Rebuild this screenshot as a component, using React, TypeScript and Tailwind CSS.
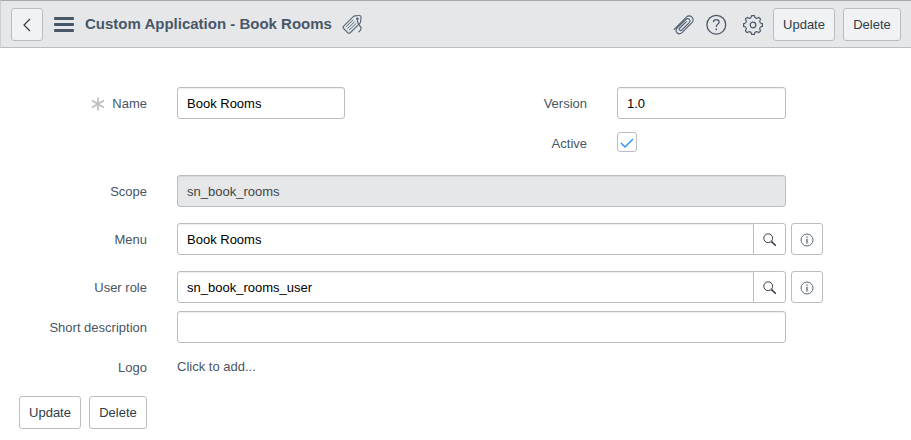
import React from "react";

const buttonBase =
  "flex shrink-0 items-center justify-center rounded-[3px] border border-[#bcbdc2] text-[13px] text-[#2e3d49]";

function BackIcon() {
  return (
    <svg width="10" height="16" viewBox="0 0 10 16" fill="none" stroke="#343d47" strokeWidth="1.2">
      <path d="M8 2 L2 8 L8 14" />
    </svg>
  );
}

function TagIcon() {
  return (
    <svg width="22" height="22" viewBox="0 0 22 22" fill="none" stroke="#5c6a7c" strokeWidth="1.2" strokeLinecap="round" strokeLinejoin="round">
      <path d="M11.3 2.6 Q12 2 13 1.9 L17 1.5 Q19 1.4 19 3.2 L18.6 7.6 Q18.5 8.6 17.8 9.3 L8.2 18.8 Q7 19.8 5.9 18.8 L1.6 14.5 Q.6 13.3 1.7 12.2 Z" />
      <path d="M4.2 12.6 L11 6.2 M5.7 14.3 L12.5 7.9 M7.2 16 L14 9.6" strokeWidth="1" />
      <path d="M15.4 4.5 V7 Q15.6 9.3 17.6 11.5 Q20.8 14.8 17 17.8" />
      <circle cx="15.4" cy="4.8" r=".8" />
    </svg>
  );
}

function ClipIcon() {
  return (
    <svg width="22" height="22" viewBox="0 0 22 22" fill="none" stroke="#4f5d6e" strokeWidth="1.1" strokeLinecap="round" strokeLinejoin="round">
      <path d="M1.2 15.4 L13.4 3.2 C17 -.2 22.6 4.8 19 8.6 L9 18.6 C5.4 21.8 1 17.4 4.3 13.9 L13 5.4 C15.3 3.3 18.5 6.2 16.3 8.6 L8.8 16 C7.3 17.4 5.3 15.6 6.8 14 L13.4 7.6" />
    </svg>
  );
}

function HelpIcon() {
  return (
    <svg width="22" height="22" viewBox="0 0 22 22" fill="none" stroke="#4a5868" strokeWidth="1.3">
      <circle cx="11.3" cy="10.7" r="9.4" />
      <path d="M8.4 8.1 Q8.5 5.6 11.3 5.6 Q14.1 5.6 14.1 8 Q14.1 9.3 12.7 10.2 Q11.3 11.1 11.3 13.1" />
      <path d="M11.3 14.5 V16.2" strokeWidth="1.6" />
    </svg>
  );
}

function GearIcon() {
  return (
    <svg width="22" height="22" viewBox="0 0 22 22" fill="none" stroke="#4a5868" strokeWidth="1.2" strokeLinejoin="round">
      <path d="M8.1 4.1 Q9 3.8 9.3 2.8 L9.6 1.6 H12.4 L12.7 2.8 Q13 3.8 13.9 4.1 Q14.8 4.5 15.7 4 L16.8 3.4 L18.6 5.2 L18 6.3 Q17.5 7.2 17.9 8.1 Q18.2 9 19.2 9.3 L20.4 9.6 V12.4 L19.2 12.7 Q18.2 13 17.9 13.9 Q17.5 14.8 18 15.7 L18.6 16.8 L16.8 18.6 L15.7 18 Q14.8 17.5 13.9 17.9 Q13 18.2 12.7 19.2 L12.4 20.4 H9.6 L9.3 19.2 Q9 18.2 8.1 17.9 Q7.2 17.5 6.3 18 L5.2 18.6 L3.4 16.8 L4 15.7 Q4.5 14.8 4.1 13.9 Q3.8 13 2.8 12.7 L1.6 12.4 V9.6 L2.8 9.3 Q3.8 9 4.1 8.1 Q4.5 7.2 4 6.3 L3.4 5.2 L5.2 3.4 L6.3 4 Q7.2 4.5 8.1 4.1 Z" />
      <circle cx="11" cy="11" r="2.8" />
    </svg>
  );
}

function SearchIcon() {
  return (
    <svg width="14" height="14" viewBox="0 0 14 14" fill="none" stroke="#343d47">
      <circle cx="5.2" cy="5.2" r="4.4" strokeWidth="1" />
      <path d="M8.4 8.4 L12.8 12.8" strokeWidth="1.5" />
    </svg>
  );
}

function InfoIcon() {
  return (
    <svg width="14" height="14" viewBox="0 0 14 14" fill="none" stroke="#5f6874">
      <circle cx="7" cy="7" r="6" strokeWidth="1" />
      <path d="M7 5.8 V10.6 M7 3.4 V4.7" strokeWidth="1.3" />
    </svg>
  );
}

function RequiredIcon() {
  return (
    <svg width="14" height="14" viewBox="0 0 14 14" stroke="#bcbec3" strokeWidth="1.7">
      <path d="M7 .5 V13.5 M1 3.5 L13 10.5 M13 3.5 L1 10.5" />
    </svg>
  );
}

function Label({ children, required = false }: { children: React.ReactNode; required?: boolean }) {
  return (
    <div className="flex w-[147px] shrink-0 items-center justify-end gap-[7px] pt-px text-[#485563]">
      {required && <RequiredIcon />}
      <span>{children}</span>
    </div>
  );
}

const inputBase =
  "flex h-8 items-center border border-[#bcbdc2] px-[9px] pt-[2px] shadow-[inset_0_1px_1px_rgba(0,0,0,0.07)]";

function ReferenceRow({ label, value }: { label: string; value: string }) {
  return (
    <div className="flex h-8">
      <Label>{label}</Label>
      <div className={`${inputBase} ml-[30px] w-[577px] rounded-l-[3px] text-black`}>{value}</div>
      <button className={`${buttonBase} -ml-px h-8 w-[33px] rounded-l-none pt-[2px]`}>
        <SearchIcon />
      </button>
      <button className={`${buttonBase} ml-[5px] h-8 w-8 pt-[2px]`}>
        <InfoIcon />
      </button>
    </div>
  );
}

export default function App() {
  return (
    <div className="h-[440px] w-[911px] overflow-hidden bg-white font-['Liberation_Sans',Arial,sans-serif] text-[13px] leading-4">
      <header className="flex h-12 items-center border-t border-b border-l border-t-[#a9a9ab] border-b-[#bcbdc2] border-l-[#cfd0d4] bg-[#e6e7e9] pt-px pl-[10px]">
        <button className={`${buttonBase} h-[33px] w-8 bg-[#f1f2f4]`}>
          <BackIcon />
        </button>
        <div className="ml-[11px] flex w-5 flex-col gap-[3px]">
          <span className="h-[3px] rounded-[1px] bg-[#485768]" />
          <span className="h-[3px] rounded-[1px] bg-[#485768]" />
          <span className="h-[3px] rounded-[1px] bg-[#485768]" />
        </div>
        <h1 className="ml-[11px] w-[247px] pb-[2px] text-[15px] leading-4 font-bold whitespace-nowrap text-[#485768]">
          Custom Application - Book Rooms
        </h1>
        <span className="ml-[10px]"><TagIcon /></span>
        <div className="ml-auto flex items-center pr-[10px]">
          <ClipIcon />
          <span className="ml-[10px]"><HelpIcon /></span>
          <span className="ml-[15px]"><GearIcon /></span>
          <button className={`${buttonBase} ml-[9px] h-[33px] w-[62px] bg-[#f1f2f4]`}>Update</button>
          <button className={`${buttonBase} ml-2 h-[33px] w-[58px] bg-[#f1f2f4]`}>Delete</button>
        </div>
      </header>

      <main className="pt-[39px]">
        <div className="flex h-8">
          <Label required>Name</Label>
          <div className={`${inputBase} ml-[30px] w-[168px] rounded-[3px] text-black`}>Book Rooms</div>
          <div className="flex w-[242px] items-center justify-end pt-px text-[#485563]">Version</div>
          <div className={`${inputBase} ml-[30px] w-[169px] rounded-[3px] text-black`}>1.0</div>
        </div>
        <div className="mt-[13px] flex h-5">
          <div className="flex w-[587px] items-center justify-end pt-[3px] text-[#485563]">Active</div>
          <div className="ml-[30px] flex size-5 items-center justify-center rounded-[3px] border border-[#bcbdc2] pt-px">
            <svg width="14" height="12" viewBox="0 0 14 12" fill="none" stroke="#278efc" strokeWidth="1.4">
              <path d="M1 6 L5 10 L13 2" />
            </svg>
          </div>
        </div>
        <div className="mt-[23px] flex h-8">
          <Label>Scope</Label>
          <div className={`${inputBase} ml-[30px] w-[609px] rounded-[3px] bg-[#e6e7e9] text-[#444444]`}>sn_book_rooms</div>
        </div>
        <div className="mt-4 flex flex-col gap-4">
          <ReferenceRow label="Menu" value="Book Rooms" />
          <ReferenceRow label="User role" value="sn_book_rooms_user" />
        </div>
        <div className="mt-2 flex h-8">
          <Label>Short description</Label>
          <div className={`${inputBase} ml-[30px] w-[609px] rounded-[3px]`} />
        </div>
        <div className="mt-2 flex h-8">
          <Label>Logo</Label>
          <div className="ml-[30px] flex items-center text-[#485563]">Click to add...</div>
        </div>
        <div className="mt-[13px] flex gap-2 pl-[19px]">
          <button className={`${buttonBase} h-[33px] w-[62px]`}>Update</button>
          <button className={`${buttonBase} h-[33px] w-[58px]`}>Delete</button>
        </div>
      </main>
    </div>
  );
}
